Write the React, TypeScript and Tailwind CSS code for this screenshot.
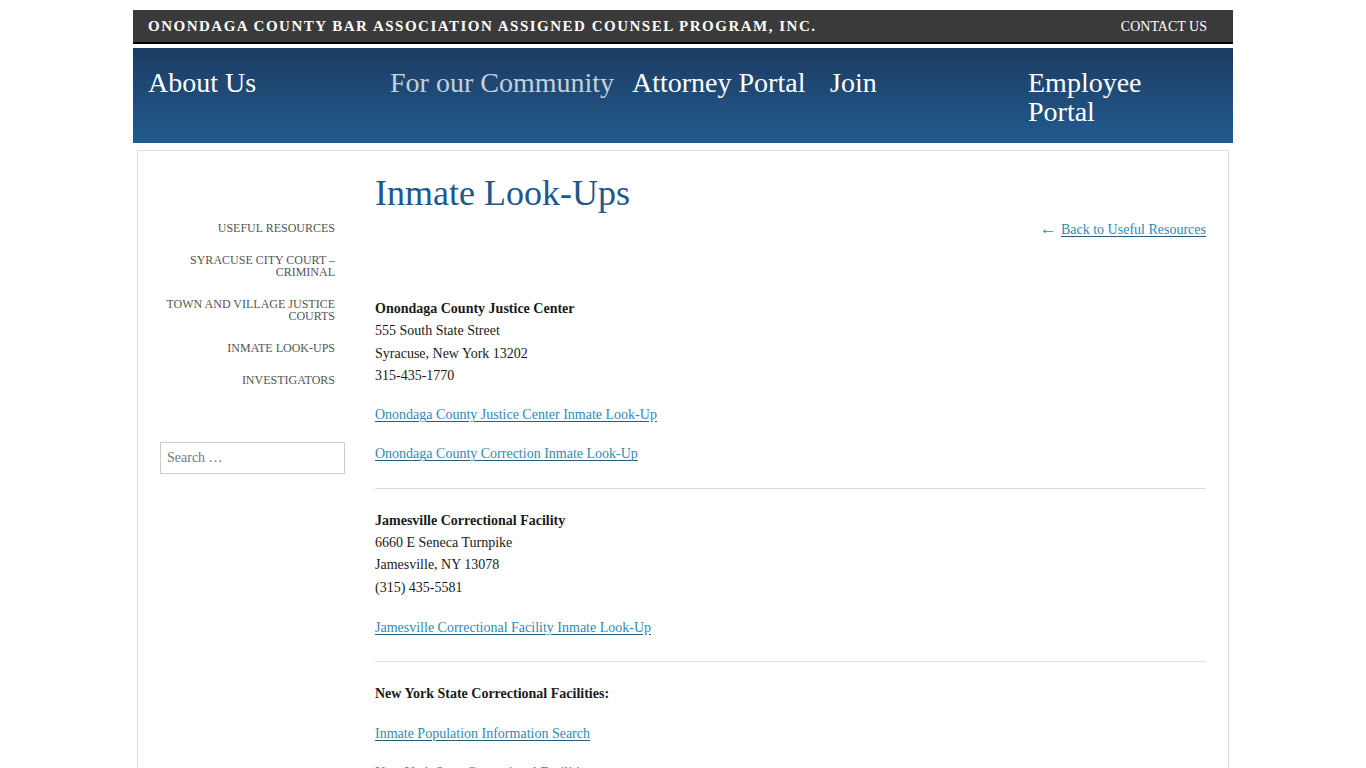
import React from "react";

const serif = { fontFamily: '"Liberation Serif", "Times New Roman", serif' };

const navItems = [
  { label: "About Us", w: "w-[242px]", dim: false },
  { label: "For our Community", w: "w-[242px]", dim: true },
  { label: "Attorney Portal", w: "w-[198px]", dim: false },
  { label: "Join", w: "w-[198px]", dim: false },
  { label: "Employee Portal", w: "w-[150px]", dim: false },
];

const sideLinks = [
  ["USEFUL RESOURCES"],
  ["SYRACUSE CITY COURT –", "CRIMINAL"],
  ["TOWN AND VILLAGE JUSTICE", "COURTS"],
  ["INMATE LOOK-UPS"],
  ["INVESTIGATORS"],
];

const Link = ({ children }: { children: React.ReactNode }) => (
  <p className="mb-[17px]">
    <a href="#" className="text-[#2f8ab5] underline decoration-[#2a5d7c] underline-offset-2">
      {children}
    </a>
  </p>
);

const App = () => {
  return (
    <div className="min-h-screen bg-white pt-[10px]" style={serif}>
      <div className="w-[1100px] mx-auto">
        {/* top strip */}
        <div className="h-[34px] bg-[#3a3a3a] border-b-2 border-black flex items-center justify-between pl-[15px] pr-[26px]">
          <span className="text-white font-bold text-[15px] tracking-[1.5px]">
            ONONDAGA COUNTY BAR ASSOCIATION ASSIGNED COUNSEL PROGRAM, INC.
          </span>
          <a href="#" className="text-white text-[14px]">
            CONTACT US
          </a>
        </div>

        {/* main nav */}
        <nav className="mt-[4px] h-[95px] bg-gradient-to-b from-[#1b3c62] to-[#235b8f] flex items-start pl-[15px] pt-[20px]">
          {navItems.map((item) => (
            <a
              key={item.label}
              href="#"
              className={`${item.w} shrink-0 text-[28px] leading-[29px] ${item.dim ? "text-[#c3d0de]" : "text-white"}`}
            >
              {item.label}
            </a>
          ))}
        </nav>

        {/* content */}
        <div className="mt-[7px] mx-[4px] border border-[#dddddd] border-b-0 min-h-[640px] flex px-[22px] gap-[30px]">
          <aside className="w-[185px] shrink-0 pt-[71px]">
            <ul className="text-right pr-[10px] text-[#555555] text-[12px] leading-[12px]">
              {sideLinks.map((lines) => (
                <li key={lines[0]} className="mb-[20px]">
                  {lines.map((l) => (
                    <div key={l}>{l}</div>
                  ))}
                </li>
              ))}
            </ul>
            <input
              type="text"
              placeholder="Search …"
              className="mt-[36px] w-[185px] h-[32px] border border-[#cccccc] px-[6px] text-[14px] text-[#333] placeholder:text-[#777777] outline-none"
              style={serif}
            />
          </aside>

          <main className="flex-1 pt-[20px] text-[14px] leading-[22.3px] text-[#1a1a1a]">
            <h1 className="text-[36px] leading-[44px] text-[#21578a]">Inmate Look-Ups</h1>
            <div className="mt-[4px] h-[22px] text-right">
              <span className="text-[#2f8ab5] text-[17px] leading-none">← </span>
              <a href="#" className="text-[#2f8ab5] underline decoration-[#2a5d7c] underline-offset-2">
                Back to Useful Resources
              </a>
            </div>

            <div className="mt-[57px]">
              <p className="mb-[17px]">
                <strong>Onondaga County Justice Center</strong>
                <br />
                555 South State Street
                <br />
                Syracuse, New York 13202
                <br />
                315-435-1770
              </p>
              <Link>Onondaga County Justice Center Inmate Look-Up</Link>
              <Link>Onondaga County Correction Inmate Look-Up</Link>
              <hr className="mt-[22px] mb-[21px] border-0 border-t border-[#dddddd]" />

              <p className="mb-[18px]">
                <strong>Jamesville Correctional Facility</strong>
                <br />
                6660 E Seneca Turnpike
                <br />
                Jamesville, NY 13078
                <br />
                (315) 435-5581
              </p>
              <Link>Jamesville Correctional Facility Inmate Look-Up</Link>
              <hr className="mt-[22px] mb-[21px] border-0 border-t border-[#dddddd]" />

              <p className="mb-[17px]">
                <strong>New York State Correctional Facilities:</strong>
              </p>
              <Link>Inmate Population Information Search</Link>
              <Link>New York State Correctional Facilities</Link>
            </div>
          </main>
        </div>
      </div>
    </div>
  );
};

export default App;
